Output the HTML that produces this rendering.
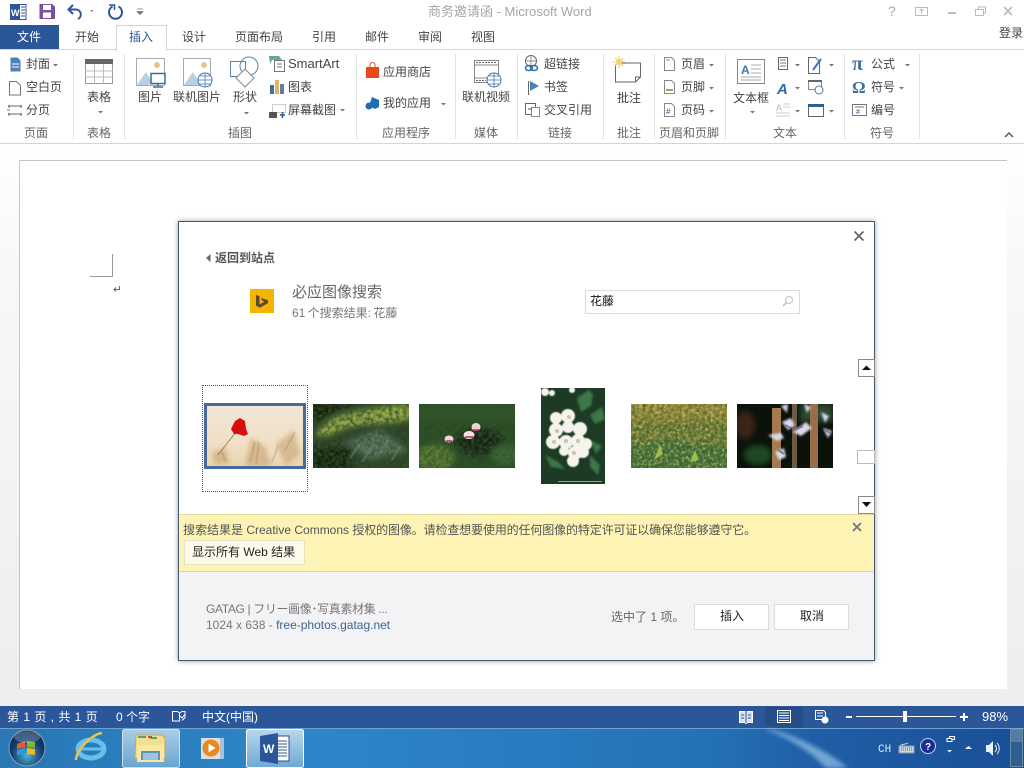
<!DOCTYPE html>
<html lang="zh"><head><meta charset="utf-8"><title>商务邀请函 - Microsoft Word</title>
<style>
html,body{margin:0;padding:0;width:1024px;height:768px;overflow:hidden;background:#fff}
body{position:relative;font:12px "Liberation Sans","Noto Sans CJK SC",sans-serif;color:#444}
.a{position:absolute}
.t{position:absolute;white-space:nowrap;line-height:16px;color:#444}
.g{color:#666}
.sep{position:absolute;top:54px;height:85px;width:1px;background:#e1e1e1}
svg{position:absolute;overflow:visible}
</style></head><body>

<!-- title bar -->
<div class="t" style="left:428px;top:4px;color:#a6a6a6;font-size:13px">商务邀请函 - Microsoft Word</div>
<svg style="left:0;top:0" width="150" height="25" viewBox="0 0 150 25">
 <rect x="11" y="4.500" width="15" height="15" fill="#fff" stroke="#2b579a"/><rect x="10" y="4" width="10" height="16" fill="#2b579a"/>
 <text x="11" y="16" font-size="9" font-weight="bold" fill="#fff" font-family="Liberation Sans">W</text>
 <path d="M21 7h4M21 10h4M21 13h4M21 16h4" stroke="#2b579a"/>
 <path d="M40 4.500h12l2.500 2.500v11.500h-14.500z" fill="#7b4f9e" stroke="#7b4f9e"/><rect x="43" y="5" width="8" height="5" fill="#fff"/><rect x="43" y="12.500" width="8" height="5.500" fill="#fff"/>
 <path d="M73 5l-4.500 4.500 4.500 4.500" fill="none" stroke="#2b579a" stroke-width="2"/><path d="M69 9.500h7a5 5 0 0 1 2 9.500" fill="none" stroke="#2b579a" stroke-width="2"/>
 <path d="M90 10h3.500l-1.750 2z" fill="#888"/>
 <path d="M112.500 6.500a6.500 6.500 0 1 0 6 0" fill="none" stroke="#2b579a" stroke-width="2"/><path d="M109 5h5.500v5" fill="none" stroke="#2b579a" stroke-width="1.500"/>
 <path d="M137 9h6M137 11.500l3 3 3-3z" stroke="#777" fill="#777" stroke-width=".8"/>
</svg>
<svg style="left:880px;top:0" width="144" height="25" viewBox="0 0 144 25">
 <text x="8" y="16" font-size="14" fill="#aaa" font-family="Liberation Sans">?</text>
 <rect x="35.500" y="7.500" width="12" height="8" fill="none" stroke="#bbb"/><path d="M41.500 14v-4M39.500 11l2-2 2 2" fill="none" stroke="#bbb"/>
 <path d="M68 13h8" stroke="#bbb" stroke-width="2"/>
 <path d="M95.500 9.500h8v6h-8zM98.500 9.500v-2.500h7v6h-2" fill="none" stroke="#bbb"/>
 <path d="M124 7l8 8M132 7l-8 8" stroke="#bbb" stroke-width="1.700"/>
</svg>

<!-- tabs -->
<div class="a" style="left:0;top:25px;width:59px;height:25px;background:#2b579a"></div>
<div class="t" style="left:17px;top:29px;color:#fff">文件</div>
<div class="a" style="left:116px;top:25px;width:49px;height:25px;background:#fff;border:1px solid #d4d4d4;border-bottom:0;z-index:2"></div>
<div class="a" style="left:0;top:49px;width:1024px;height:1px;background:#d4d4d4"></div>
<div class="t" style="left:75px;top:29px">开始</div>
<div class="t" style="left:129px;top:29px;color:#2b579a;z-index:3">插入</div>
<div class="t" style="left:182px;top:29px">设计</div>
<div class="t" style="left:235px;top:29px">页面布局</div>
<div class="t" style="left:312px;top:29px">引用</div>
<div class="t" style="left:365px;top:29px">邮件</div>
<div class="t" style="left:418px;top:29px">审阅</div>
<div class="t" style="left:471px;top:29px">视图</div>
<div class="t" style="left:999px;top:25px;font-size:12px">登录</div>

<!-- ribbon -->
<div class="a" style="left:0;top:143px;width:1024px;height:1px;background:#d4d4d4"></div>
<div class="sep" style="left:73px"></div><div class="sep" style="left:124px"></div><div class="sep" style="left:356px"></div><div class="sep" style="left:455px"></div><div class="sep" style="left:517px"></div><div class="sep" style="left:603px"></div><div class="sep" style="left:654px"></div><div class="sep" style="left:725px"></div><div class="sep" style="left:844px"></div><div class="sep" style="left:919px"></div>

<div class="t" style="left:26px;top:56px">封面</div>
<div class="t" style="left:26px;top:79px">空白页</div>
<div class="t" style="left:26px;top:102px">分页</div>
<div class="t g" style="left:24px;top:125px">页面</div>
<div class="t" style="left:87px;top:89px">表格</div>
<div class="t g" style="left:87px;top:125px">表格</div>
<div class="t" style="left:138px;top:89px">图片</div>
<div class="t" style="left:173px;top:89px">联机图片</div>
<div class="t" style="left:233px;top:89px">形状</div>
<div class="t g" style="left:228px;top:125px">插图</div>
<div class="t" style="left:288px;top:56px;font-size:13px">SmartArt</div>
<div class="t" style="left:288px;top:79px">图表</div>
<div class="t" style="left:288px;top:102px">屏幕截图</div>
<div class="t" style="left:383px;top:64px">应用商店</div>
<div class="t" style="left:383px;top:95px">我的应用</div>
<div class="t g" style="left:382px;top:125px">应用程序</div>
<div class="t" style="left:462px;top:89px">联机视频</div>
<div class="t g" style="left:474px;top:125px">媒体</div>
<div class="t" style="left:544px;top:56px">超链接</div>
<div class="t" style="left:544px;top:79px">书签</div>
<div class="t" style="left:544px;top:102px">交叉引用</div>
<div class="t g" style="left:548px;top:125px">链接</div>
<div class="t" style="left:617px;top:90px">批注</div>
<div class="t g" style="left:617px;top:125px">批注</div>
<div class="t" style="left:681px;top:56px">页眉</div>
<div class="t" style="left:681px;top:79px">页脚</div>
<div class="t" style="left:681px;top:102px">页码</div>
<div class="t g" style="left:659px;top:125px">页眉和页脚</div>
<div class="t" style="left:733px;top:90px">文本框</div>
<div class="t g" style="left:773px;top:125px">文本</div>
<div class="t" style="left:871px;top:56px">公式</div>
<div class="t" style="left:871px;top:79px">符号</div>
<div class="t" style="left:871px;top:102px">编号</div>
<div class="t g" style="left:870px;top:125px">符号</div>

<svg style="left:0;top:50px" width="1024" height="94" viewBox="0 50 1024 94">
 <path d="M10.500 57.500h7l3 3v11h-10z" fill="#4f81b5"/><path d="M12 64h7M12 67h7" stroke="#fff"/>
 <path d="M9.500 81.500h7l4 4v9.500h-11z" fill="#fff" stroke="#777"/>
 <path d="M8 106h14M8 114h14M9 105v3M21 105v3M9 113v3M21 113v3" stroke="#666" fill="none"/><path d="M7 110h3" stroke="#4f81b5"/>
 <rect x="85.500" y="59.500" width="27" height="24" fill="#fff" stroke="#999"/><rect x="85" y="59" width="28" height="5" fill="#666"/>
 <path d="M85 71h28M85 77h28M94.500 64v20M103.500 64v20" stroke="#bbb"/>
 <rect x="136.500" y="58.500" width="28" height="27" fill="#fff" stroke="#aaa"/><circle cx="157" cy="65" r="3" fill="#e6c48c"/><path d="M137 85l9-13 8 13z" fill="#b9cfe4"/><path d="M148 85l5-6 5 6z" fill="#d6e2ee"/>
 <rect x="151" y="73.500" width="14" height="10" fill="#fff" stroke="#3c6e8f" stroke-width="1.500"/><path d="M158 84v2M153 87h10" stroke="#3c6e8f" stroke-width="1.500"/>
 <rect x="183.500" y="58.500" width="27" height="27" fill="#fff" stroke="#aaa"/><circle cx="204" cy="65" r="3" fill="#e6c48c"/><path d="M184 85l9-13 8 13z" fill="#b9cfe4"/>
 <circle cx="205" cy="80" r="7" fill="#fff" stroke="#3c75b5"/><path d="M198 80h14M205 73v14M200 76h10M200 84h10" stroke="#3c75b5" stroke-width=".8"/>
 <rect x="230.500" y="61.500" width="15" height="15" fill="#fff" stroke="#5a84a8"/><circle cx="249" cy="66" r="9" fill="none" stroke="#5a84a8"/><path d="M245 69l9 9-9 9-9-9z" fill="#fff" stroke="#888"/>
 <path d="M269 56h10l3 4h-10l-2 4z" fill="#6fa58f"/><rect x="274.500" y="60.500" width="10" height="11" fill="#fff" stroke="#777"/><path d="M277 64h5M277 67h5" stroke="#777"/>
 <rect x="270" y="85" width="4" height="9" fill="#3f6f99"/><rect x="275" y="80" width="4" height="14" fill="#e2b266"/><rect x="280" y="84" width="4" height="10" fill="#5f7f9f"/>
 <rect x="272.500" y="104.500" width="13" height="8" fill="none" stroke="#999" stroke-dasharray="1 1"/><rect x="269" y="112" width="8" height="6" fill="#555"/><path d="M280 115h5M282.500 112v6" stroke="#2b579a" stroke-width="1.500"/>
 <path d="M366 67h13v11h-13z" fill="#e8481c"/><path d="M370 67v-2a2.500 2.500 0 0 1 5 0v2" fill="none" stroke="#e8481c"/>
 <path d="M372 97l7 3v7l-4 2-6-3z" fill="#1f6fb5"/><circle cx="369" cy="106" r="3.500" fill="#1f6fb5"/>
 <rect x="474.500" y="60.500" width="24" height="22" fill="#fff" stroke="#888"/><path d="M474 65h24M474 78h24" stroke="#888"/><path d="M476 62.500h20M476 80.500h10" stroke="#666" stroke-dasharray="2 1"/>
 <circle cx="494" cy="80" r="7" fill="#fff" stroke="#3c75b5"/><path d="M487 80h14M494 73v14M489 76h10M489 84h10" stroke="#3c75b5" stroke-width=".8"/>
 <circle cx="531" cy="61" r="5.500" fill="none" stroke="#666"/><path d="M526 61h10M531 56v10" stroke="#666" stroke-width=".7"/><ellipse cx="529" cy="68" rx="3.500" ry="2.500" fill="none" stroke="#2e6aa8" stroke-width="1.500"/><ellipse cx="534" cy="68" rx="3.500" ry="2.500" fill="none" stroke="#2e6aa8" stroke-width="1.500"/>
 <path d="M528.500 81v14" stroke="#666"/><path d="M530 81l9 5-9 5z" fill="#4e81b5"/>
 <rect x="525.500" y="103.500" width="10" height="11" fill="#fff" stroke="#666"/><rect x="531.500" y="107.500" width="8" height="9" fill="#fff" stroke="#888"/><path d="M528 109h4" stroke="#555"/>
 <path d="M615.500 64.500v17.500h20l5-5v-14h-20" fill="#fff" stroke="#666"/><path d="M635.500 82v-5h5" fill="none" stroke="#666"/><path d="M619 56v12M613 62h12M615 58l8 8M623 58l-8 8" stroke="#ecc95a"/><circle cx="619" cy="62" r="3" fill="#f3d36a"/>
 <path d="M664.500 57.500h7l3 3v10h-10z" fill="#fff" stroke="#888"/><path d="M666 60h4" stroke="#888"/>
 <path d="M664.500 80.500h7l3 3v10h-10z" fill="#fff" stroke="#888"/><path d="M666 90h7" stroke="#b99a55" stroke-width="2"/>
 <path d="M664.500 103.500h7l3 3v10h-10z" fill="#fff" stroke="#888"/><text x="666" y="114" font-size="8" fill="#2b579a" font-family="Liberation Sans">#</text>
 <rect x="737.500" y="59.500" width="27" height="24" fill="#fff" stroke="#888"/><text x="741" y="74" font-size="12" font-weight="bold" fill="#3c75b5" font-family="Liberation Sans">A</text><path d="M751 65h10M751 69h10M751 73h10M741 77h20M741 80h20" stroke="#aaa"/>
 <rect x="778.500" y="57.500" width="9" height="12" fill="#fff" stroke="#666"/><path d="M780 60h6M780 63h6M780 66h6" stroke="#5c7fa3"/>
 <text x="777" y="94" font-size="15" font-weight="bold" font-style="italic" fill="#2e6aa8" font-family="Liberation Sans">A</text>
 <text x="776" y="111" font-size="9" fill="#bbb" font-family="Liberation Sans">A</text><path d="M783 104h7M783 107h7M776 113h14M776 116h14" stroke="#ccc"/>
 <path d="M808.500 57.500h7l4 4v12h-11z" fill="#fff" stroke="#666"/><path d="M813 70l8-11" stroke="#3c75b5" stroke-width="2"/>
 <rect x="808.500" y="80.500" width="13" height="9" fill="#fff" stroke="#888"/><rect x="808" y="80" width="14" height="2" fill="#666"/><circle cx="819" cy="90" r="4" fill="#fff" stroke="#4b7f8f"/>
 <rect x="808.500" y="104.500" width="15" height="12" fill="#fff" stroke="#666"/><rect x="808" y="104" width="16" height="3" fill="#2f5f8f"/>
 <text x="852" y="70" font-size="20" font-weight="bold" fill="#3f6f9f" font-family="Liberation Serif">π</text>
 <text x="852" y="93" font-size="17" font-weight="bold" fill="#3f6f9f" font-family="Liberation Serif">Ω</text>
 <rect x="852.500" y="104.500" width="14" height="11" fill="#fff" stroke="#777"/><path d="M855 107h9" stroke="#777"/><text x="856" y="114" font-size="7" fill="#2b579a" font-family="Liberation Sans">#</text>
 <g fill="#777">
  <path d="M53 64h5l-2.500 2.500zM98 111h5l-2.500 2.500zM244 112h5l-2.500 2.500zM340 109h5l-2.500 2.500zM441 103h5l-2.500 2.500zM709 64h5l-2.500 2.500zM709 87h5l-2.500 2.500zM709 110h5l-2.500 2.500zM750 111h5l-2.500 2.500zM795 64h5l-2.500 2.500zM795 87h5l-2.500 2.500zM795 110h5l-2.500 2.500zM829 64h5l-2.500 2.500zM829 110h5l-2.500 2.500zM905 64h5l-2.500 2.500zM899 87h5l-2.500 2.500z"/>
 </g>
 <path d="M1005 137l4-4 4 4" fill="none" stroke="#555" stroke-width="1.500"/>
</svg>

<!-- document area -->
<div class="a" style="left:0;top:144px;width:1024px;height:562px;background:linear-gradient(#fff 0,#f8f8f8 120px,#eeeeee 540px)"></div>
<div class="a" style="left:19px;top:160px;width:988px;height:529px;background:#fff;border-top:1px solid #c6c6c6;border-left:1px solid #c6c6c6;box-sizing:border-box"></div>
<svg style="left:0;top:0" width="200" height="300"><path d="M90 276.500h22.500V254" fill="none" stroke="#999"/><path d="M119.500 286v3.500h-5M116 287.500l-2 2 2 2" fill="none" stroke="#666"/></svg>

<!-- dialog -->
<div class="a" style="left:178px;top:221px;width:695px;height:438px;background:#fff;border:1px solid #44586e;box-shadow:0 0 5px rgba(0,0,0,.4)"></div>
<svg style="left:853px;top:230px" width="12" height="12"><path d="M1.500 1.500l9 9M10.500 1.500l-9 9" stroke="#666" stroke-width="1.800"/></svg>
<svg style="left:206px;top:254px" width="6" height="8"><path d="M4.500 0v8L0 4z" fill="#666"/></svg>
<div class="t" style="left:215px;top:250px;font-weight:bold;color:#555">返回到站点</div>
<svg style="left:250px;top:289px" width="24" height="24" viewBox="0 0 24 24"><rect width="24" height="24" fill="#f4b400"/><path d="M6 6l3.500 1.200v8.300l5-2.800-2.200-1-1.300-3 7 2.500v2.800l-8 4.800-4-2.200z" fill="#5a4a32"/></svg>
<div class="t" style="left:292px;top:284px;font-size:15px;line-height:18px;color:#666">必应图像搜索</div>
<div class="t" style="left:292px;top:305px;color:#777;word-spacing:-1px">61 个搜索结果: 花藤</div>
<div class="a" style="left:585px;top:290px;width:213px;height:22px;border:1px solid #dcdcdc;background:#fff"></div>
<div class="t" style="left:590px;top:293px;color:#111">花藤</div>
<svg style="left:781px;top:295px" width="13" height="13"><circle cx="8" cy="5" r="3.500" fill="none" stroke="#ccc" stroke-width="1.300"/><path d="M5.500 7.500L2 11" stroke="#bbb" stroke-width="1.500"/></svg>

<!-- selection -->
<div class="a" style="left:202px;top:385px;width:104px;height:105px;border:1px dotted #555"></div>

<svg style="left:0;top:0" width="1024" height="768">
 <defs>
  <filter id="b05" x="-20%" y="-20%" width="140%" height="140%"><feGaussianBlur stdDeviation=".5"/></filter>
  <filter id="b1" x="-20%" y="-20%" width="140%" height="140%"><feGaussianBlur stdDeviation="1"/></filter>
  <filter id="b2" x="-20%" y="-20%" width="140%" height="140%"><feGaussianBlur stdDeviation="2"/></filter>
  <filter id="b3" x="-20%" y="-20%" width="140%" height="140%"><feGaussianBlur stdDeviation="3"/></filter>
  <filter id="tx" x="0" y="0" width="100%" height="100%"><feTurbulence type="fractalNoise" baseFrequency=".28" numOctaves="2" seed="4"/><feColorMatrix values="0 0 0 0 .03  0 0 0 0 .09  0 0 0 0 .02  2.200 0 0 0 -.8"/></filter>
  <filter id="ty" x="0" y="0" width="100%" height="100%"><feTurbulence type="fractalNoise" baseFrequency=".35" numOctaves="2" seed="9"/><feColorMatrix values="0 0 0 0 .82  0 0 0 0 .68  0 0 0 0 .2  2.400 0 0 0 -1"/></filter>
  <clipPath id="c1"><rect x="207" y="406" width="96" height="60"/></clipPath>
  <clipPath id="c2"><rect x="313" y="404" width="96" height="64"/></clipPath>
  <clipPath id="c3"><rect x="419" y="404" width="96" height="64"/></clipPath>
  <clipPath id="c4"><rect x="541" y="388" width="64" height="96"/></clipPath>
  <clipPath id="c5"><rect x="631" y="404" width="96" height="64"/></clipPath>
  <clipPath id="c6"><rect x="737" y="404" width="96" height="64"/></clipPath>
  <linearGradient id="wh" x1="0" y1="0" x2="0" y2="1"><stop offset="0" stop-color="#efe6d8"/><stop offset=".6" stop-color="#f1e0c6"/><stop offset="1" stop-color="#e9d4b0"/></linearGradient>
 </defs>
 <!-- image 1 -->
 <rect x="205.500" y="404.500" width="99" height="63" fill="url(#wh)" stroke="#48699c" stroke-width="3"/>
 <g clip-path="url(#c1)">
  <g filter="url(#b2)"><path d="M212 452l14-4 4 16h-16zM245 466l6-28 14 8 6 20zM276 444l18-14 6 24-14 12z" fill="#c9a878" opacity=".65"/></g>
  <path d="M250 462l5-20M256 464l3-22M285 450l10-18M222 452l4 10M272 462l6-16" stroke="#a8845a" stroke-width="1.200" opacity=".55" filter="url(#b05)"/>
  <path d="M218 455l18-23" stroke="#7d5f44" opacity=".75"/>
  <path d="M231 429l4-8 5-3 5 3 1 8 2 5-4 2-6-2-4 0z" fill="#d80e0e"/>
 </g>
 <!-- image 2 -->
 <g clip-path="url(#c2)">
  <rect x="313" y="404" width="96" height="64" fill="#2e4029"/>
  <g filter="url(#b3)">
   <path d="M309 400h66l-34 9-28 14z" fill="#141f0f"/>
   <path d="M315 436c6-12 20-20 34-23s36-8 62-9v16c-14 2-26 4-38 4s-30 4-44 12z" fill="#98a84a"/>
   <path d="M345 442l35-13 29 22-40 9z" fill="#5a7261"/>
   <path d="M309 448h42v22h-42z" fill="#18230f"/>
  </g>
  <rect x="313" y="404" width="96" height="64" filter="url(#tx)"/>
  <path d="M350 458l10-14M362 462l12-18M378 456l10-16M392 460l8-14" stroke="#718578" stroke-width="2" opacity=".6" filter="url(#b05)"/>
 </g>
 <!-- image 3 -->
 <g clip-path="url(#c3)">
  <rect x="419" y="404" width="96" height="64" fill="#2a4a25"/>
  <g filter="url(#b3)"><path d="M419 404h96v18h-96z" fill="#31532c"/><ellipse cx="435" cy="458" rx="20" ry="14" fill="#5b7a36"/><ellipse cx="480" cy="442" rx="24" ry="14" fill="#132312"/><ellipse cx="505" cy="455" rx="14" ry="10" fill="#3b6a35"/></g>
  <rect x="419" y="404" width="96" height="64" filter="url(#tx)"/>
  <ellipse cx="449" cy="439" rx="4.500" ry="3.500" fill="#eed5da"/><ellipse cx="469" cy="435" rx="5.500" ry="4" fill="#f5e2e6"/><ellipse cx="476" cy="427" rx="4.500" ry="4" fill="#eed2d8"/>
  <path d="M465 437h9M446 441h6M473 430h6" stroke="#a9304a" stroke-width="1.500"/>
 </g>
 <!-- image 4 -->
 <g clip-path="url(#c4)">
  <rect x="541" y="388" width="64" height="96" fill="#1c3a24"/>
  <g filter="url(#b1)"><path d="M577 398l12-8 4 4-2 12-10 6zM590 415l12-8 3 12-10 5zM590 440l12 6-6 8zM590 455l10 10-2 10-8-8zM545 455l12 6 8 8-14-2z" fill="#3e7647"/></g>
  <g fill="#f4f4ec" filter="url(#b05)">
   <circle cx="545" cy="392" r="4"/><circle cx="552" cy="393" r="3"/><circle cx="572" cy="390" r="3"/>
   <circle cx="556" cy="418" r="6"/><circle cx="568" cy="416" r="7"/><circle cx="580" cy="429" r="7"/><circle cx="556" cy="430" r="7"/>
   <circle cx="568" cy="427" r="6"/><circle cx="553" cy="442" r="7"/><circle cx="566" cy="442" r="7"/><circle cx="578" cy="441" r="7"/><circle cx="586" cy="444" r="6"/>
   <circle cx="575" cy="453" r="7"/><circle cx="564" cy="451" r="5"/><circle cx="583" cy="452" r="6"/><circle cx="573" cy="461" r="6"/>
  </g>
  <g fill="#c9c79a"><circle cx="557" cy="431" r="2"/><circle cx="566" cy="441" r="2"/><circle cx="578" cy="441" r="2"/><circle cx="554" cy="442" r="2"/><circle cx="574" cy="453" r="2"/><circle cx="569" cy="417" r="2"/></g>
  <rect x="558" y="481" width="44" height="1" fill="#999"/>
 </g>
 <!-- image 5 -->
 <g clip-path="url(#c5)">
  <rect x="631" y="404" width="96" height="64" fill="#6f7b36"/>
  <g filter="url(#b3)"><path d="M625 398h108v22h-108z" fill="#9c8a3a"/><path d="M625 448l40-8 68 8v26h-108z" fill="#41703a"/></g>
  <rect x="631" y="404" width="96" height="64" filter="url(#ty)" opacity=".75"/>
  <rect x="631" y="404" width="96" height="64" filter="url(#tx)" opacity=".7"/>
  <path d="M654 460l6-16 3 10zM690 462l5-12 4 10z" fill="#9fbd4a"/>
 </g>
 <!-- image 6 -->
 <g clip-path="url(#c6)">
  <rect x="737" y="404" width="96" height="64" fill="#0a120a"/>
  <g filter="url(#b3)"><ellipse cx="745" cy="425" rx="10" ry="14" fill="#3e2218"/><ellipse cx="758" cy="455" rx="14" ry="10" fill="#1f4a20"/><path d="M800 404h33v18h-33z" fill="#2d4a33"/></g>
  <rect x="772" y="408" width="9" height="60" fill="#a47a50"/><rect x="792" y="404" width="5" height="64" fill="#6e5a42"/><rect x="810" y="404" width="8" height="64" fill="#9a6e46"/>
  <g fill="#d9d9e8" filter="url(#b1)">
   <path d="M768 435l13-2 3 5-7 3zM782 422l9-4 4 7-7 5zM793 432l13-10 6 6-11 8zM775 452l9-4 2 9-7 3zM781 406l7-2-1 9zM804 404l7 3-4 6zM821 412l8 4-4 7zM823 428l9 3-4 7z"/>
  </g>
  <path d="M785 425l6 3M795 430l8-4M778 450l6 4M825 430l5 3" stroke="#7e79a8" stroke-width="2"/>
 </g>
</svg>

<!-- scrollbar -->
<div class="a" style="left:858px;top:359px;width:15px;height:16px;border:1px solid #8a8a8a;background:#fff"></div>
<svg style="left:862px;top:365px" width="9" height="6"><path d="M0 5l4.500-4.500L9 5z" fill="#111"/></svg>
<div class="a" style="left:857px;top:450px;width:16px;height:12px;border:1px solid #bdbdbd;background:#fff"></div>
<div class="a" style="left:858px;top:496px;width:15px;height:16px;border:1px solid #8a8a8a;background:#fff"></div>
<svg style="left:862px;top:502px" width="9" height="6"><path d="M0 0l4.500 5L9 0z" fill="#111"/></svg>

<!-- yellow bar -->
<div class="a" style="left:179px;top:514px;width:695px;height:56px;background:#fcf3b4;border-top:1px solid #e2dc9c;border-bottom:1px solid #dcd8a8"></div>
<div class="t" style="left:183px;top:522px;color:#555">搜索结果是 Creative Commons <span style="letter-spacing:-.13px">授权的图像。请检查想要使用的任何图像的特定许可证以确保您能够遵守它。</span></div>
<svg style="left:852px;top:522px" width="10" height="10"><path d="M1 1l8 8M9 1l-8 8" stroke="#777" stroke-width="1.800"/></svg>
<div class="a" style="left:184px;top:540px;width:119px;height:23px;background:#fdfaeb;border:1px solid #e6e2c4"></div>
<div class="t" style="left:192px;top:544px;color:#222">显示所有 Web 结果</div>

<!-- footer -->
<div class="a" style="left:179px;top:572px;width:695px;height:88px;background:#f3f3f5"></div>
<div class="t" style="left:206px;top:601px;color:#777;letter-spacing:-.35px">GATAG | フリー画像･写真素材集 ...</div>
<div class="t" style="left:206px;top:617px;color:#777">1024 x 638 - <span style="color:#3b6691">free-photos.gatag.net</span></div>
<div class="t" style="left:611px;top:609px;color:#666">选中了 1 项。</div>
<div class="a" style="left:694px;top:604px;width:73px;height:24px;background:#fff;border:1px solid #dcdcdc"></div>
<div class="a" style="left:774px;top:604px;width:73px;height:24px;background:#fff;border:1px solid #dcdcdc"></div>
<div class="t" style="left:720px;top:608px;color:#222">插入</div>
<div class="t" style="left:800px;top:608px;color:#222">取消</div>

<!-- status bar -->
<div class="a" style="left:0;top:706px;width:1024px;height:22px;background:#2b579a"></div>
<div class="t" style="left:7px;top:709px;color:#fff;word-spacing:1px">第 1 页 , 共 1 页</div>
<div class="t" style="left:116px;top:709px;color:#fff">0 个字</div>
<div class="t" style="left:202px;top:709px;color:#fff">中文(中国)</div>
<div class="t" style="left:982px;top:709px;color:#fff;font-size:13px">98%</div>
<div class="a" style="left:765px;top:707px;width:38px;height:21px;background:#264d88"></div>
<svg style="left:0;top:706px" width="1024" height="22" viewBox="0 706 1024 22">
 <path d="M172.500 711.500h5l2 1.500v8h-7zM180 713l2-1.500h3v6l-3 3" fill="none" stroke="#fff"/><path d="M180 716l2 2 3-4" fill="none" stroke="#fff"/>
 <path d="M739.500 711.500h5l1.500 1 1.500-1h5v11h-5l-1.500 1-1.500-1h-5z" fill="#d9e3f1" stroke="#fff"/><path d="M746 712v11" stroke="#2b579a"/><path d="M741 715h3M741 718h3M748 715h3M748 718h3" stroke="#2b579a"/>
 <rect x="777.500" y="710.500" width="13" height="12" fill="#2b579a" stroke="#fff"/><path d="M779 713h10M779 715.500h10M779 718h10M779 720.500h10" stroke="#fff"/>
 <path d="M815.500 710.500h8l2 2v7h-10z" fill="#2b579a" stroke="#fff"/><path d="M817 713h6M817 716h6" stroke="#fff"/><circle cx="825" cy="720" r="3.500" fill="#fff"/>
 <path d="M846 717h6" stroke="#fff" stroke-width="2"/><path d="M856 716.500h100" stroke="#fff"/><rect x="903" y="711" width="4" height="11" fill="#fff"/>
 <path d="M960 717h8M964 713v8" stroke="#fff" stroke-width="2"/>
</svg>

<!-- taskbar -->
<div class="a" style="left:0;top:728px;width:1024px;height:40px;background:linear-gradient(90deg,#2a77b4 0,#2e86c8 30%,#2a7cc0 50%,#2470b5 70%,#1f5ea6 80%,#1a4f96 100%);border-top:1px solid #6ea3d0;box-sizing:border-box"></div>
<svg style="left:0;top:728px" width="1024" height="40" viewBox="0 728 1024 40">
 <defs>
  <radialGradient id="orb" cx=".5" cy=".7" r=".7"><stop offset="0" stop-color="#4fb4d9"/><stop offset=".6" stop-color="#123e70"/><stop offset="1" stop-color="#0e2a4f"/></radialGradient>
  <linearGradient id="btn" x1="0" y1="0" x2="0" y2="1"><stop offset="0" stop-color="#b9d6ec"/><stop offset="1" stop-color="#6fa9d4"/></linearGradient>
  <filter id="b4" x="-50%" y="-50%" width="200%" height="200%"><feGaussianBlur stdDeviation="2"/></filter>
 </defs>
 <path d="M770 729c30 8 60 24 78 39h-22c-14-15-36-30-62-39z" fill="#8fbde6" opacity=".75" filter="url(#b4)"/>
 <rect x="122.500" y="729.500" width="57" height="38" rx="2" fill="url(#btn)" stroke="#dfeaf4" opacity=".9"/>
 <rect x="246.500" y="729.500" width="57" height="38" rx="2" fill="url(#btn)" stroke="#fff"/>
 <circle cx="27" cy="748" r="18" fill="url(#orb)" stroke="#8aa0b5"/>
 <path d="M17 744l8-3v6l-8 2z" fill="#e8582c"/><path d="M27 741l8 1v6l-8-1z" fill="#7cb82f"/><path d="M17 750l8-2v6l-8 1z" fill="#2f9ad8"/><path d="M27 748l8 1v6l-8-1z" fill="#f5b81f"/>
 <ellipse cx="27" cy="737" rx="13" ry="6" fill="#fff" opacity=".22"/>
 <ellipse cx="91" cy="749" rx="13" ry="9" fill="none" stroke="#66c0ea" stroke-width="5"/>
 <path d="M78 749h25" stroke="#66c0ea" stroke-width="3"/>
 <path d="M76 760c0-10 16-26 26-27" fill="none" stroke="#e8c34e" stroke-width="2.500"/>
 <path d="M136 735h26l3 3v20h-30z" fill="#f3dd8e" stroke="#c9a94f"/><path d="M138 737h8M150 738h7" stroke="#5aa06a" stroke-width="2"/><path d="M148 737h4" stroke="#c94a3a" stroke-width="2"/>
 <path d="M137 745h27v17h-27z" fill="#f8e8a5"/><path d="M142 760v-8h17v8" fill="#9bc4dd" stroke="#5d95b8" stroke-width="2"/>
 <rect x="214" y="738" width="10" height="21" fill="#a8c3d9"/><rect x="201" y="738" width="19" height="21" fill="#d9dfe3"/>
 <circle cx="211" cy="748" r="8.500" fill="#e88a1c"/><path d="M208.500 743.500l7 4.500-7 4.500z" fill="#fff"/>
 <path d="M270 736h19v25h-19z" fill="#fff" stroke="#2b4f88"/><path d="M277 741h10M277 744h10M277 747h10M277 750h10M277 753h10M277 756h10" stroke="#345a90"/>
 <path d="M260 736l18-3v31l-18-3z" fill="#2b579a"/>
 <text x="263" y="753" font-size="12" font-weight="bold" fill="#fff" font-family="Liberation Sans">W</text>
 <text x="878" y="752" font-size="11" fill="#dfe8f2" font-family="Liberation Mono">CH</text>
 <path d="M899 747c3-4 6-2 9-4" fill="none" stroke="#cfd8e0"/><rect x="899" y="746" width="15" height="7" fill="#cbd5de" stroke="#8c99a8"/>
 <path d="M901 748h11M901 750h11" stroke="#667" stroke-dasharray="1 1"/>
 <circle cx="928" cy="746" r="7.500" fill="#1d2e92" stroke="#c8d2f0"/><text x="925" y="750" font-size="10" font-weight="bold" fill="#fff" font-family="Liberation Sans">?</text>
 <path d="M947 738.500h5v3h-5zM949.500 738.500v-2h5v3h-2" fill="none" stroke="#fff"/><path d="M947 750h5l-2.500 2.500z" fill="#eee"/>
 <path d="M965 749l3.500-3 3.500 3z" fill="#fff"/>
 <path d="M986 745h3l4-4v15l-4-4h-3z" fill="#e8eef4"/><path d="M995 745c2 2 2 5 0 7M997 743c3 3 3 8 0 11" fill="none" stroke="#dde6ef"/>
 <rect x="1010.500" y="729.500" width="12" height="37" fill="#2c5e90" stroke="#6b8aa8"/><rect x="1011" y="730" width="11" height="12" fill="#6a89a3" opacity=".7"/>
</svg>
</body></html>
